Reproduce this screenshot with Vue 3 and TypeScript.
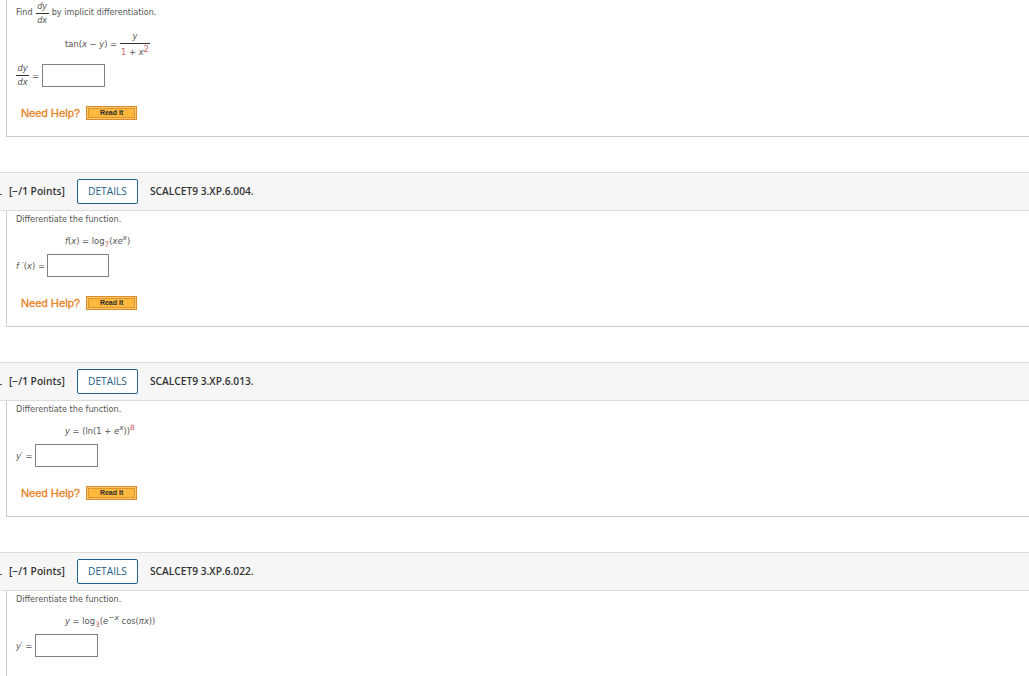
<script setup lang="ts">
interface Question {
  code: string;
}

const questions: Question[] = [
  { code: 'SCALCET9 3.XP.6.004.' },
  { code: 'SCALCET9 3.XP.6.013.' },
  { code: 'SCALCET9 3.XP.6.022.' },
];
</script>

<template>
  <main class="page">
    <section class="question-body question-body--first">
      <div class="prompt prompt--find">
        Find
        <span class="frac frac--inline"><i>dy</i><i class="frac__bottom">dx</i></span>
        by implicit differentiation.
      </div>
      <div class="formula formula--fraction">
        <span>tan(<i>x</i> − <i>y</i>) =</span>
        <span class="frac frac--wide"><i>y</i><span class="frac__bottom frac__bottom--power"><span class="num">1</span> + <i>x</i><sup class="num frac__power">2</sup></span></span>
      </div>
      <div class="answer answer--fraction">
        <span class="frac"><i>dy</i><i class="frac__bottom">dx</i></span>
        <span>=</span>
        <span class="answer__input"></span>
      </div>
      <div class="help">
        <span class="help__label">Need Help?</span>
        <span class="help__button">Read It</span>
      </div>
    </section>

    <section v-for="(q, index) in questions" :key="q.code" class="question">
      <header class="question-head">
        <span class="question-head__dot"></span>
        <span class="question-head__points">[−/1 Points]</span>
        <span class="question-head__details">DETAILS</span>
        <span class="question-head__code">{{ q.code }}</span>
      </header>
      <div class="question-body">
        <div class="prompt">Differentiate the function.</div>
        <div v-if="index === 0" class="formula">
          <span><i>f</i>(<i>x</i>) = log<sub class="num">7</sub>(<i>xe</i><sup><i>x</i></sup>)</span>
        </div>
        <div v-else-if="index === 1" class="formula">
          <span><i>y</i> = (ln(1 + <i>e</i><sup><i>x</i></sup>))<sup class="num">8</sup></span>
        </div>
        <div v-else class="formula">
          <span><i>y</i> = log<sub class="num">3</sub>(<i>e</i><sup>−<i>x</i></sup> cos(<i>πx</i>))</span>
        </div>
        <div class="answer">
          <span v-if="index === 0"><i class="answer__f">f</i>′(<i>x</i>) =</span>
          <span v-else><i>y</i>′ =</span>
          <span class="answer__input" :class="{ 'answer__input--wide': index === 0 }"></span>
        </div>
        <div v-if="index < 2" class="help">
          <span class="help__label">Need Help?</span>
          <span class="help__button">Read It</span>
        </div>
      </div>
    </section>
  </main>
</template>

<style scoped>
.page {
  width: 1029px;
  height: 676px;
  overflow: hidden;
  font-family: "DejaVu Sans", Verdana, sans-serif;
  font-size: 8.15px;
  color: #555;
}

.question {
  margin-top: 35px;
}

.question-head {
  display: flex;
  align-items: center;
  box-sizing: border-box;
  height: 39px;
  background: #f6f6f6;
  border-top: 1px solid #dcdcdc;
  border-bottom: 1px solid #dcdcdc;
  font-family: "Open Sans", sans-serif;
  font-size: 10.2px;
  font-weight: 600;
  color: #333;
}

.question-head__dot {
  width: 2px;
  height: 1px;
  margin: 6px 7px 0 0;
  background: #555;
}

.question-head__points {
  width: 68px;
  margin-bottom: 1px;
}

.question-head__details {
  box-sizing: border-box;
  width: 61px;
  height: 25px;
  line-height: 22px;
  text-align: center;
  font-weight: 500;
  border: 1px solid #1f6391;
  border-radius: 2px;
  background: #fff;
  color: #1f5d87;
  margin-right: 12px;
}

.question-head__code {
  margin-bottom: 1px;
}

.question-body {
  box-sizing: border-box;
  height: 116px;
  margin-left: 6px;
  padding-left: 9px;
  border-left: 1px solid #ccc;
  border-bottom: 1px solid #ccc;
}

.question-body--first {
  height: 137px;
}

.prompt {
  padding-top: 2px;
  height: 19px;
  line-height: 12px;
}

.prompt--find {
  display: flex;
  align-items: center;
  gap: 3px;
  height: 24px;
  padding-top: 0;
}

.frac {
  display: inline-flex;
  flex-direction: column;
  align-items: center;
  line-height: 13px;
  min-width: 13px;
}

.frac--inline {
  margin-top: 3px;
}

.frac--wide {
  min-width: 30px;
}

.frac__bottom {
  border-top: 1px solid #333;
  width: 100%;
  text-align: center;
}

.frac__bottom--power {
  padding-top: 2px;
}

.frac__power {
  font-size: 8.5px;
  vertical-align: 3px;
}

.formula {
  display: flex;
  align-items: center;
  gap: 3px;
  height: 18px;
  padding-left: 49px;
  font-size: 8.35px;
  white-space: nowrap;
  line-height: 12px;
}

.formula--fraction {
  padding-top: 8px;
  height: 24px;
}

.answer {
  display: flex;
  align-items: center;
  gap: 2px;
  height: 23px;
  margin-top: 4px;
  font-size: 8.35px;
}

.answer__f {
  margin-right: 3px;
}

.answer--fraction {
  margin-top: 8px;
  gap: 3px;
}

.answer__input {
  box-sizing: border-box;
  width: 63px;
  height: 23px;
  background: #fff;
  border: 1px solid #808080;
}

.answer__input--wide {
  width: 62px;
}

.help {
  display: flex;
  align-items: center;
  gap: 6px;
  margin-top: 16px;
  padding-left: 5px;
  height: 20px;
}

.help__label {
  font-family: "Liberation Sans", Arial, sans-serif;
  font-size: 11.2px;
  color: #e8821e;
  -webkit-text-stroke: 0.3px #e8821e;
}

.help__button {
  box-sizing: border-box;
  width: 51px;
  height: 14px;
  line-height: 12px;
  text-align: center;
  font-family: "Liberation Sans", Arial, sans-serif;
  font-size: 7px;
  font-weight: 700;
  color: #2a2a2a;
  background: #fdb93e;
  border: 1px solid #dd8a2a;
  box-shadow: inset 0 0 0 1px #fbc76e, inset 0 0 0 2px #e0952f;
}

sup,
sub {
  font-size: 7.5px;
  line-height: 0;
}

.num {
  color: #c66;
}
</style>

<style>
html,
body {
  margin: 0;
  background: #fff;
}
</style>
